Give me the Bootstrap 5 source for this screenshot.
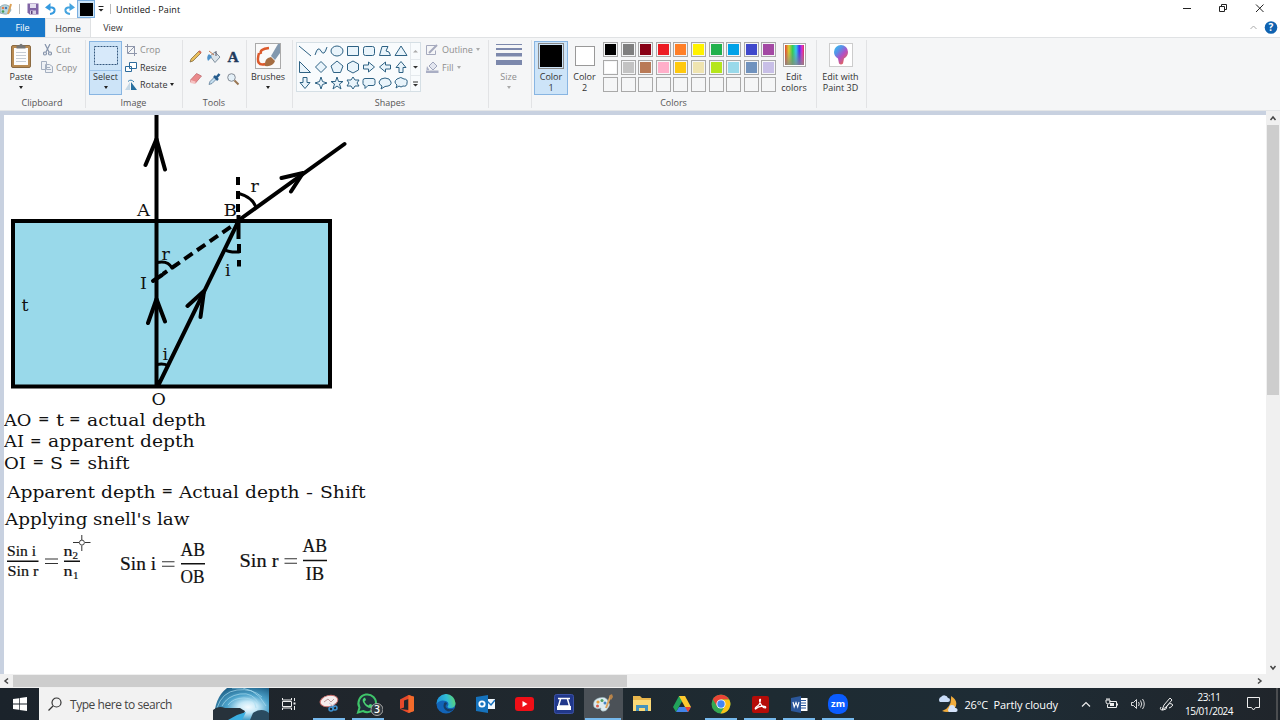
<!DOCTYPE html>
<html lang="en">
<head>
    <meta charset="UTF-8">
    <meta name="viewport" content="width=device-width, initial-scale=1.0">
    <title>Untitled - Paint</title>
    <!-- Bootstrap CSS -->
    <link href="https://cdn.jsdelivr.net/npm/bootstrap@5.3.0/dist/css/bootstrap.min.css" rel="stylesheet">
    <style>
        body { width: 1280px; height: 720px; overflow: hidden; font-family: "Open Sans", "Noto Sans", sans-serif; font-size: 9px; line-height: 11px; color: #333; }
        svg { display: block; flex: none; }
        .cell { display: flex; align-items: center; justify-content: center; flex: none; }
        .caret { width: 0; height: 0; border: 2.5px solid transparent; border-top: 3px solid #222; border-bottom: 0; }
        .caret.off { border-top-color: #aaa; }
        .off { color: #8d8d8d; }

        /* title bar and tabs */
        .titlebar { height: 18px; color: #111; }
        .vline { width: 1px; height: 10px; background: #bbb; }
        .quick-on { width: 18px; height: 18px; background: #cce4f7; border: 1px solid #79aee0; }
        .quick-on div { width: 13px; height: 13px; background: #000; }
        .tabs { height: 19px; }
        .tabs .file { width: 45px; background: #1979ca; color: #fff; }
        .tabs .home { width: 46px; background: #f5f6f7; border: 1px solid #dfe1e3; border-bottom: 0; }
        .tabs .view { width: 44px; }

        /* ribbon */
        .ribbon { height: 74px; background: #f5f6f7; border-top: 1px solid #e0e2e4; border-bottom: 1px solid #e3e5e7; }
        .group { display: flex; flex-direction: column; flex: none; border-right: 1px solid #e2e3e5; margin: 2px 0; padding-top: 1px; }
        .group-body { height: 55px; display: flex; }
        .group-name { height: 13px; line-height: 16px; text-align: center; color: #555; padding-right: 1px; }
        .big { display: flex; flex-direction: column; align-items: center; height: 54px; padding-top: 2px; text-align: center; flex: none; }
        .big .pic { height: 28px; display: flex; }
        .big .caret { margin-top: 4px; }
        .picked { background: #cde4f8; border: 1px solid #88b5e2; padding-top: 1px; }
        .picked .pic.split { border-bottom: 1px solid #9fc6ea; }
        .line { height: 17.5px; display: flex; align-items: center; white-space: nowrap; }
        .gallery { width: 125px; height: 50px; margin-top: 1px; border: 1px solid #d5dfe5; background: #f8fbfd; }
        .gallery-items { width: 113px; display: flex; flex-wrap: wrap; align-content: flex-start; }
        .gallery-items svg { fill: #e9f4fb; stroke: #2e6284; stroke-width: 1; }
        .swatches { width: 177px; display: grid; grid-template-columns: repeat(10, 15px); grid-auto-rows: 15px; gap: 2.5px 2.6px; align-content: start; padding-top: 1px; margin-left: 2px; }
        .swatch { border: 1px solid #a9a9a9; padding: 1px; background-clip: content-box; }

        /* work area */
        .work { height: 563px; }
        .paper { background: #c8d1e0; padding: 4px 0 0 4px; width: 1266px; }
        .paper svg { background: #fff; }
        .bookman { font-family: "DejaVu Serif", serif; font-size: 17.5px; fill: #111; }
        .bookman .eq { font-size: 13.5px; font-weight: 700; }
        .cambria { font-family: "Liberation Serif", serif; fill: #111; stroke: #111; stroke-width: .2; }
        .vscroll { width: 14px; background: #f0f0f0; }
        .hscroll { height: 14px; background: #f0f0f0; }
        .thumb { background: #cdcdcd; }

        /* taskbar */
        .taskbar { height: 32px; background: linear-gradient(90deg, #1b232b 0, #20262c 30%, #1e2b32 60%, #1e2c35 78%, #20252b 100%); color: #fff; }
        .search { width: 230px; background: #f2f2f2; color: #444; font-size: 12px; }
        .apps { width: 549px; margin-left: 1px; }
        .app { flex: 1; display: flex; align-items: center; justify-content: center; }
        .app.open { background: linear-gradient(#76b9ed, #76b9ed) center bottom / 32px 2px no-repeat; }
        .app.front { background-color: #4b5157; background-size: 36px 2px; }
        .weather { font-size: 11px; letter-spacing: -.12px; white-space: pre; }
        .clock { width: 56px; font-size: 10px; line-height: 14px; letter-spacing: -.5px; text-align: center; }
    </style>
</head>
<body class="bg-white d-flex flex-column">

    <!-- Title bar -->
    <div class="titlebar d-flex align-items-center">
        <div class="cell" style="width:13px">
            <svg width="13" height="14" viewBox="0 0 13 14"><path d="M0 5Q4 1 9 4L11 8Q9 13 4 12L0 11Z" fill="#b8d7df" stroke="#7995a0" stroke-width=".7"/><circle cx="3" cy="6" r="1.3" fill="#e57b4a"/><circle cx="3" cy="9.5" r="1.3" fill="#4a9a55"/><circle cx="6" cy="6" r="1.2" fill="#4478b8"/><path d="M11 2L8 12" stroke="#dda156" stroke-width="2"/></svg>
        </div>
        <div class="cell" style="width:12px"><div class="vline"></div></div>
        <div class="cell" style="width:16px">
            <svg width="12" height="12" viewBox="0 0 12 12"><path d="M.5.5h11v11h-9l-2-2Z" fill="#8064a5"/><path d="M3 1h6v4H3Z" fill="#e5e0f0"/><path d="M3 7.5h6V11H3Z" fill="#d5cce3"/><path d="M4 8h1.5v3H4Z" fill="#5c437d"/></svg>
        </div>
        <div class="cell" style="width:19px">
            <svg width="12" height="12" viewBox="0 0 12 12" fill="none" stroke="#359adf" stroke-width="2"><path d="M3 4.5h4Q10 5 9.5 8Q9 10.500 5 11"/><path d="M5.500 0L0 4.500L5.500 8Z" fill="#359adf" stroke="none"/></svg>
        </div>
        <div class="cell" style="width:17px">
            <svg width="12" height="12" viewBox="0 0 12 12" fill="none" stroke="#45a4df" stroke-width="2"><path d="M9 4.500H5Q2 5 2.500 8Q3 10.500 7 11"/><path d="M6.500 0L12 4.500L6.500 8Z" fill="#45a4df" stroke="none"/></svg>
        </div>
        <div class="quick-on cell"><div></div></div>
        <div class="cell" style="width:11px">
            <svg width="6" height="6" viewBox="0 0 6 6"><path d="M.5.500h5" stroke="#222"/><path d="M.5 3h5L3 5.500Z" fill="#222"/></svg>
        </div>
        <div class="cell" style="width:8px"><div class="vline"></div></div>
        <span style="letter-spacing:.1px;margin-left:2px">Untitled - Paint</span>
        <svg class="ms-auto" width="100" height="18" viewBox="1180 0 100 18" fill="none" stroke="#222"><path d="M1183 8.500h8M1219.500 6.500h5v5h-5zM1221.500 6.500v-2h5v5h-2M1256 4.500l7.500 7.500M1263.500 4.500l-7.500 7.500"/></svg>
    </div>

    <!-- Tabs -->
    <div class="tabs d-flex">
        <div class="cell file">File</div>
        <div class="cell home">Home</div>
        <div class="cell view">View</div>
        <svg class="ms-auto" width="30" height="19" viewBox="1250 18 30 19"><path d="M1250.500 29l3-3 3 3" fill="none" stroke="#aaa"/><circle cx="1271" cy="27.500" r="6.300" fill="#0f62b0"/><text x="1271" y="31" text-anchor="middle" font-size="10" font-weight="700" fill="#fff">?</text></svg>
    </div>

    <!-- Ribbon -->
    <div class="ribbon d-flex">
        <div class="group" style="width:86px">
            <div class="group-body">
                <div class="big" style="width:42px">
                    <div class="pic"><svg width="22" height="26" viewBox="0 0 22 26"><rect x="1.500" y="2.500" width="19" height="22" rx="1.500" fill="#b98b52" stroke="#8c6b42"/><path d="M4 5h14v17H4Z" fill="#fdfdfd"/><path d="M6 9.500h10M6 12.500h10M6 15.500h10M6 18.500h10" stroke="#c5ccd5"/><path d="M6.500 2.500h2.500Q11-1 13 2.500h2.500v3h-9Z" fill="#777"/></svg></div>
                    Paste<div class="caret"></div>
                </div>
                <div class="off">
                    <div class="line"><svg style="margin:0 4px 0 1px" width="9" height="12" viewBox="0 0 9 12" fill="none" stroke="#8593aa" stroke-width="1.200"><path d="M2 0l4 8M7 0L3 8"/><circle cx="2" cy="9.500" r="1.500"/><circle cx="7" cy="9.500" r="1.500"/></svg>Cut</div>
                    <div class="line" style="margin-left:-1px"><svg style="margin-right:3px" width="12" height="12" viewBox="0 0 12 12" fill="#eef1f5" stroke="#a4afc0"><path d="M.5.500h5v8h-5zM4.500 3.500h4l3 2v6h-7z"/><path d="M6 6.500h3M6 8.500h4"/></svg>Copy</div>
                </div>
            </div>
            <div class="group-name">Clipboard</div>
        </div>

        <div class="group" style="width:97px">
            <div class="group-body">
                <div class="big picked" style="width:33px;margin-left:3px">
                    <div class="pic split w-100 justify-content-center"><svg width="26" height="24" viewBox="0 0 26 24"><rect x="1.500" y="3.500" width="23" height="18" fill="#d7e9fa" stroke="#35577c" stroke-dasharray="2 1"/></svg></div>
                    Select<div class="caret"></div>
                </div>
                <div style="margin-left:3px">
                    <div class="line off"><svg style="margin-right:3px" width="12" height="12" viewBox="0 0 12 12" fill="none" stroke="#8e96ab"><path d="M2.500 0v9.500H12M0 2.500h9.500V12M3 9l7-7"/></svg>Crop</div>
                    <div class="line"><svg style="margin-right:3px" width="12" height="12" viewBox="0 0 12 12" fill="#fff" stroke="#2c6b9c"><path d="M4.500 1.500h7v6h-7zM.5 5.500h6v5h-6z"/></svg>Resize</div>
                    <div class="line"><svg style="margin-right:3px" width="12" height="12" viewBox="0 0 12 12"><path d="M5 3v8H0Z" fill="#c5d8e6"/><path d="M6 3l6 8H6Z" fill="#286f9f"/><path d="M3 2.500Q6-.5 9 3" fill="none" stroke="#3980b0"/></svg>Rotate<div class="caret" style="margin-left:3px"></div></div>
                </div>
            </div>
            <div class="group-name">Image</div>
        </div>

        <div class="group" style="width:64px">
            <div class="group-body">
                <svg width="63" height="54" viewBox="183 41 63 54">
                    <path d="M190 62l1-3 8-8 2 2-8 8Z" fill="#e8bd5b" stroke="#776036" stroke-width=".7"/><path d="M199 51l2 2" stroke="#d56a5a" stroke-width="2"/>
                    <path d="M210 56l5-4 5 5-5 5.500Z" fill="#dce4ea" stroke="#65798a" stroke-width=".8"/><path d="M209 51l5 4" stroke="#c97b4f"/><path d="M209 54q-3 3-1 7l4-4Z" fill="#4f92ca"/><path d="M216 51v5" stroke="#556"/>
                    <text x="233" y="61.500" text-anchor="middle" font-family="Liberation Serif, serif" font-size="15.500" font-weight="700" fill="#1f3b5c" stroke="#1f3b5c" stroke-width=".4">A</text>
                    <path d="M190.500 80l6-6.500 5 2.500-6 7-5-1Z" fill="#ea8a8c" stroke="#b76468" stroke-width=".7"/><path d="M190.500 80l5 1.500v2.500l-5-1Z" fill="#f5c2c2"/>
                    <path d="M209 84.500l1-3 5-5 2 2-5 5Z" fill="#c5dff0" stroke="#50708c" stroke-width=".7"/><path d="M214 76l4 4M216 78l3.500-4" stroke="#265c8d" stroke-width="2.500"/>
                    <circle cx="231.500" cy="77.500" r="3.800" fill="#e4f0f8" stroke="#858c96"/><path d="M234.500 80.500l4 4" stroke="#987652" stroke-width="2"/>
                </svg>
            </div>
            <div class="group-name">Tools</div>
        </div>

        <div class="group" style="width:46px">
            <div class="group-body">
                <div class="big w-100" style="padding-right:3px">
                    <div class="pic"><svg width="26" height="26" viewBox="0 0 26 26"><rect x=".5" y=".5" width="25" height="25" fill="#fafafa" stroke="#aaa"/><path d="M14 5Q4 6 6 11M4 10Q0 24 11 21" fill="none" stroke="#dc5a2c" stroke-width="2.500"/><path d="M10 23q-1-8 6-9l4 4q-2 6-10 5Z" fill="#a56d42"/><path d="M16 13l7-12h2v9l-5 7Z" fill="#8298ae"/></svg></div>
                    Brushes<div class="caret"></div>
                </div>
            </div>
        </div>

        <div class="group" style="width:196px">
            <div class="group-body">
                <div class="gallery d-flex" style="margin-left:3px">
                    <div class="gallery-items" id="shapes"></div>
                    <svg width="10" height="48" viewBox="0 0 10 48"><path d="M.5 0v48M0 16.500h10M0 32.500h10" stroke="#e4e9ed"/><path d="M3 9.500h5L5.500 7Z" fill="#aaa"/><path d="M3 23h5l-2.500 2.500ZM3 41h5l-2.500 2.500Z" fill="#333"/><path d="M3 39h5" stroke="#333"/></svg>
                </div>
                <div class="off" style="margin-left:5px">
                    <div class="line"><svg style="margin-right:3px" width="13" height="12" viewBox="0 0 13 12" fill="none" stroke="#a5a9bd"><path d="M.5 1.500h9M.5 1.500v9h9v-4"/><path d="M3 9l8-8" stroke-width="2"/></svg>Outline<div class="caret off" style="margin-left:3px"></div></div>
                    <div class="line"><svg style="margin-right:3px" width="13" height="12" viewBox="0 0 13 12"><path d="M3 5l4-4 4 4-4 4Z" fill="#e3e6ef" stroke="#9fa5bb"/><path d="M0 9.500h12.500V12H0zM1 5q-1 3 0 5h3Z" fill="#a9aec4"/></svg>Fill<div class="caret off ms-1"></div></div>
                </div>
            </div>
            <div class="group-name">Shapes</div>
        </div>

        <div class="group" style="width:43px">
            <div class="group-body">
                <div class="big off w-100" style="padding-right:3px">
                    <div class="pic"><svg width="26" height="24" viewBox="0 0 26 24" fill="#7c88ac"><path d="M0 1h26v1H0zM0 5h26v2H0zM0 10h26v3.500H0zM0 17h26v5H0z"/></svg></div>
                    Size<div class="caret off"></div>
                </div>
            </div>
        </div>

        <div class="group" style="width:285px">
            <div class="group-body">
                <div class="big picked" style="width:34px;margin-left:2px">
                    <div class="pic"><svg width="26" height="26" viewBox="0 0 26 26"><rect x=".5" y=".5" width="25" height="25" fill="#cde4f8" stroke="#8a8a8a"/><path d="M2 2h22v22H2Z"/></svg></div>
                    <div>Color</div><div>1</div>
                </div>
                <div class="big" style="width:33px">
                    <div class="pic align-items-center" style="padding-bottom:3px"><svg width="20" height="20" viewBox="0 0 20 20"><rect x=".5" y=".5" width="19" height="19" fill="#fff" stroke="#999"/></svg></div>
                    <div>Color</div><div>2</div>
                </div>
                <div class="swatches" id="swatches"></div>
                <div class="big" style="width:28px">
                    <div class="pic"><svg width="23" height="24" viewBox="0 0 23 24"><defs><linearGradient id="hue"><stop stop-color="#d43"/><stop offset=".2" stop-color="#dc3"/><stop offset=".4" stop-color="#3c5"/><stop offset=".58" stop-color="#3ce"/><stop offset=".75" stop-color="#43e"/><stop offset=".9" stop-color="#d3c"/><stop offset="1" stop-color="#d35"/></linearGradient><linearGradient id="fade" x2="0" y2="1"><stop offset=".3" stop-color="#888" stop-opacity="0"/><stop offset="1" stop-color="#888" stop-opacity=".8"/></linearGradient></defs><rect x=".5" y=".5" width="22" height="23" fill="#fff" stroke="#aaa"/><path d="M2 2h19v20H2Z" fill="url(#hue)"/><path d="M2 2h19v20H2Z" fill="url(#fade)"/></svg></div>
                    <div>Edit</div><div>colors</div>
                </div>
            </div>
            <div class="group-name">Colors</div>
        </div>

        <div class="group" style="width:50px">
            <div class="group-body">
                <div class="big w-100 text-nowrap" style="padding-right:2px">
                    <div class="pic"><svg width="24" height="24" viewBox="0 0 24 24"><defs><linearGradient id="pin" x1="0" y1="0" x2=".8" y2="1"><stop stop-color="#32c8ee"/><stop offset=".35" stop-color="#5a8ee8"/><stop offset=".6" stop-color="#b34fc4"/><stop offset="1" stop-color="#ee6a3c"/></linearGradient></defs><rect x=".5" y=".5" width="23" height="23" fill="#fff" stroke="#ccc"/><path d="M12 2a7 7 0 0 1 7 7q0 4-4 6.500l-1 5q-2 2-4 0l-1-5Q5 13 5 9a7 7 0 0 1 7-7Z" fill="url(#pin)"/></svg></div>
                    <div>Edit with</div><div>Paint 3D</div>
                </div>
            </div>
        </div>
    </div>

    <!-- Drawing area -->
    <div class="work d-flex">
        <div class="paper">
            <svg width="1262" height="559" viewBox="4 115 1262 559">
                <g fill="none" stroke="#000" stroke-width="4" stroke-linecap="round" stroke-linejoin="round">
                    <rect x="13" y="221" width="317" height="165.500" fill="#99d9ea" stroke-linejoin="miter"/>
                    <path d="M156.500 110V386M158 386L239 220L344.500 144"/>
                    <path d="M145.500 165L156.500 139L165 169.500M148 323L156.500 299L165 321.500M187.500 306L204 291L200.500 317M281.500 178L303 173L291 191.500"/>
                    <path d="M163 274L239 221" stroke-dasharray="10 5.500" stroke-dashoffset="5" stroke-linecap="butt"/>
                    <path d="M153 281L162 275"/>
                    <path d="M238 177v8M238 191v8M238 204v8M238.500 215v24M239 244v9M239 260v6.500" stroke-linecap="butt"/>
                    <path d="M239 193.500Q252 197 256 207M157 262.500Q168 260 172 268M225.500 250Q229 252.500 239 252M157 364.500Q163 363 168 365.500" stroke-width="3"/>
                </g>
                <g class="bookman">
                    <text x="137" y="215.500" textLength="13" lengthAdjust="spacingAndGlyphs">A</text>
                    <text x="223.500" y="215.500" textLength="13.500" lengthAdjust="spacingAndGlyphs">B</text>
                    <text x="250.500" y="191.500">r</text>
                    <text x="161.500" y="260">r</text>
                    <text x="225" y="275.500">i</text>
                    <text x="140" y="288.500">I</text>
                    <text x="21.500" y="311">t</text>
                    <text x="162.500" y="359.500">i</text>
                    <text x="151.500" y="404.500">O</text>
                </g>
                <g class="bookman" id="notes"></g>
                <g class="cambria" font-size="14.500">
                    <text x="7" y="555.500" textLength="29" lengthAdjust="spacingAndGlyphs">Sin i</text>
                    <text x="7.500" y="576" textLength="31" lengthAdjust="spacingAndGlyphs">Sin r</text>
                    <text x="63.500" y="556" textLength="9" lengthAdjust="spacingAndGlyphs">n</text>
                    <text x="72.500" y="559" font-size="11">2</text>
                    <text x="63.500" y="576" textLength="9" lengthAdjust="spacingAndGlyphs">n</text>
                    <text x="73" y="579" font-size="11">1</text>
                </g>
                <g class="cambria" font-size="19">
                    <text x="120" y="570" textLength="36" lengthAdjust="spacingAndGlyphs">Sin i</text>
                    <text x="180.500" y="555.500" textLength="24.500" lengthAdjust="spacingAndGlyphs">AB</text>
                    <text x="180.500" y="582.500" textLength="24" lengthAdjust="spacingAndGlyphs">OB</text>
                    <text x="239.500" y="567" textLength="39" lengthAdjust="spacingAndGlyphs">Sin r</text>
                    <text x="302.500" y="552" textLength="24.500" lengthAdjust="spacingAndGlyphs">AB</text>
                    <text x="305.500" y="579.500" textLength="18.500" lengthAdjust="spacingAndGlyphs">IB</text>
                </g>
                <path d="M7 561.200h31.500M64 561.200h16M181 563.800h24M303 560.500h24" stroke="#111" stroke-width="1.600"/>
                <path d="M45 559h13M45 563.500h13M162 561.800h12.500M162 566.200h12.500M284.500 558.800h12.500M284.500 563.200h12.500" stroke="#333" stroke-width="1.100"/>
                <!-- crosshair cursor -->
                <path d="M73 542.500h6M85 542.500h5.500M81.800 535v5M81.800 545.500v5.500" stroke="#333"/>
                <circle cx="81.900" cy="542.600" r="2.500" fill="#fff" stroke="#444"/>
            </svg>
        </div>
        <div class="vscroll d-flex flex-column align-items-center">
            <svg width="14" height="14" viewBox="0 0 14 14"><path d="M4.500 9L7 6l2.500 3" fill="none" stroke="#444" stroke-width="1.500"/></svg>
            <div class="thumb" style="width:12px;height:270px"></div>
            <svg class="mt-auto" width="14" height="14" viewBox="0 0 14 14"><path d="M4.500 6L7 9l2.500-3" fill="none" stroke="#444" stroke-width="1.500"/></svg>
        </div>
    </div>
    <div class="hscroll d-flex align-items-center">
        <svg width="13" height="14" viewBox="0 0 13 14"><path d="M8 4.500L5 7l3 2.500" fill="none" stroke="#444" stroke-width="1.500"/></svg>
        <div class="thumb" style="width:614px;height:12px"></div>
        <svg class="ms-auto" style="margin-right:13px" width="14" height="14" viewBox="0 0 14 14"><path d="M5 4.500L8 7l-3 2.500" fill="none" stroke="#444" stroke-width="1.500"/></svg>
    </div>

    <!-- Taskbar -->
    <div class="taskbar d-flex">
        <div class="cell" style="width:39px"><svg width="14" height="14" viewBox="0 0 14 14" fill="#fff"><path d="M0 2l6-.8v5.400H0zM6.700 1.100L14 0v6.600H6.700zM0 7.400h6v5.400L0 12zM6.700 7.400H14V14l-7.300-1.100z"/></svg></div>
        <div class="search d-flex align-items-center">
            <svg style="margin:0 8px 0 9px" width="14" height="14" viewBox="0 0 14 14" fill="none" stroke="#333" stroke-width="1.200"><circle cx="8.500" cy="5.500" r="4.500"/><path d="M5 9L.5 13.500"/></svg>
            <span style="letter-spacing:-.45px;padding-top:1px">Type here to search</span>
            <svg class="ms-auto" width="57" height="32" viewBox="0 0 57 32">
                <defs><radialGradient id="ice" cx=".62" cy=".6" r=".7"><stop stop-color="#f4fbff"/><stop offset=".25" stop-color="#c5e8f7"/><stop offset=".55" stop-color="#4da3cb"/><stop offset="1" stop-color="#1d5e85"/></radialGradient></defs>
                <path d="M15 0H57V32H2Q2 10 15 0Z" fill="url(#ice)"/>
                <g fill="none" stroke="#a8dcef" stroke-width="1" opacity=".7"><path d="M5 20Q10 4 25 2T50 9M10 18Q15 8 28 6T47 16M20 0Q43-3 54 18M16 17Q21 10 32 10T44 20"/></g>
                <path d="M1 22q5-5 12-2l15 0q3 2 5 3l-2 5-8 4H1Z" fill="#27323b"/><path d="M41 25q7-5 13-2l3 2v7H38Z" fill="#2a4b60"/><path d="M16 32l9-5 9-3-4 8Z" fill="#3aaee0"/>
            </svg>
        </div>
        <div class="cell" style="width:39px"><svg width="14" height="14" viewBox="0 0 14 14" fill="none" stroke="#eee"><path d="M.5 1v2h9V1M.5 13v-2h9v2M.5 4.500h9v5h-9zM12.500 1v3M12.500 9v4"/><path d="M11.500 5.500h2v2h-2z" fill="#eee" stroke="none"/></svg></div>
        <div class="apps d-flex">
            <div class="app open"><svg width="20" height="20" viewBox="0 0 20 20"><ellipse cx="10" cy="7" rx="9" ry="5.500" transform="rotate(-12 10 7)" fill="#f5eded" stroke="#c96a67"/><path d="M5 8l4-3 3 3 3-3" fill="none" stroke="#b99"/><path d="M10 9l6 4M16 9l-4 5" stroke="#ccd"/><g fill="none" stroke="#3e91d0" stroke-width="1.500"><circle cx="12" cy="15" r="2"/><circle cx="16" cy="14" r="2"/></g></svg></div>
            <div class="app open"><svg width="30" height="26" viewBox="0 0 30 26"><path d="M5 21.500l1.500-5A8.800 8.800 0 1 1 10 20Z" fill="#20303a" stroke="#3fc469" stroke-width="2"/><path d="M11 7q-2 1-1 4 3 6 8 6 2 0 2-3l-3-1-1.500 1.500q-3-1-4-4L13 9l-1-2.500Z" fill="#4ad173"/><circle cx="24" cy="18.500" r="6" fill="#333b41" stroke="#aaa"/><text x="24" y="22.300" text-anchor="middle" font-size="10.500" font-weight="600" fill="#fff">3</text></svg></div>
            <div class="app"><svg width="16" height="18" viewBox="0 0 16 18"><path d="M1 4.500L9.500 0 15 1.700V16L9.500 18 1 14l8.500 1V4L5 5.500v7L1 14Z" fill="#e6492b"/><path d="M9.500 0L15 1.700V16l-5.500 2Z" fill="#f36b2b"/></svg></div>
            <div class="app"><svg width="20" height="20" viewBox="0 0 20 20"><defs><linearGradient id="edge" x1="0" y1=".4" x2="1" y2=".2"><stop stop-color="#1d93dc"/><stop offset=".55" stop-color="#32bdd4"/><stop offset="1" stop-color="#61d765"/></linearGradient></defs><circle cx="10" cy="10" r="9.500" fill="#1264b8"/><path d="M.5 10A9.500 9.500 0 0 1 19.500 9q0 5-5 5-3 0-3-1.500Q14 9 10 7 4 5 .5 10Z" fill="url(#edge)"/><path d="M8 9q-2 6 4 8.500 4 0 6-3-6 2-8-1-1-2 1-4-1-2-3-.5Z" fill="#163d65"/></svg></div>
            <div class="app"><svg width="19" height="18" viewBox="0 0 19 18"><path d="M11 4h8v10h-8Z" fill="#f3f8fc"/><path d="M11 6l4 4 4-5" fill="none" stroke="#1971bd" stroke-width="1.500"/><path d="M0 2l12-2v18L0 16Z" fill="#1673bd"/><circle cx="6" cy="9" r="2.700" fill="none" stroke="#fff" stroke-width="1.800"/></svg></div>
            <div class="app"><svg width="19" height="14" viewBox="0 0 19 14"><rect width="19" height="14" rx="3" fill="#f00f17"/><path d="M7.500 4l5 3-5 3Z" fill="#fff"/></svg></div>
            <div class="app"><svg width="20" height="20" viewBox="0 0 20 20"><rect x=".5" y=".5" width="19" height="19" rx="2" fill="#21388b" stroke="#3c52a5"/><path d="M4 4.500h12M6.500 5l-2 7h11l-2-7" fill="none" stroke="#fff" stroke-width="1.500"/><path d="M3 12h14v4H3Z" fill="#fff"/></svg></div>
            <div class="app open front"><svg width="20" height="20" viewBox="0 0 20 20"><path d="M1 13Q-1 6 6 4q7-2 9 3 3 4 0 7-2 4-6 3-2-1-1-3-4 2-7-1Z" fill="#dcebf0" stroke="#9cb7c0" stroke-width=".6"/><circle cx="5" cy="8" r="1.600" fill="#e8a13c"/><circle cx="9" cy="6.500" r="1.500" fill="#4d9e61"/><circle cx="4.500" cy="12" r="1.500" fill="#d95a4a"/><circle cx="12" cy="9" r="1.500" fill="#4585c4"/><path d="M18 1l-5 13" stroke="#d9a25d" stroke-width="2"/><path d="M16 2l3-2 1 3-2 3Z" fill="#b88349"/></svg></div>
            <div class="app"><svg width="18" height="16" viewBox="0 0 18 16"><path d="M0 0h7l2 2h9v13H0Z" fill="#e9b64c"/><path d="M0 4h18v11H0Z" fill="#fbd977"/><path d="M3 15V9h12v6h-3v-3H6v3Z" fill="#4593bd"/></svg></div>
            <div class="app"><svg width="18" height="16" viewBox="0 0 18 16"><path d="M6 0h6L9 5.300 3 16 0 11Z" fill="#21a35b"/><path d="M6 0h6l6 11h-6Z" fill="#fdc92e"/><path d="M6 11h12l-3 5H3Z" fill="#4285eb"/><path d="M12 11h6l-3 5Z" fill="#e74235"/></svg></div>
            <div class="app open"><svg width="20" height="20" viewBox="0 0 20 20"><circle cx="10" cy="10" r="9.500" fill="#35a853"/><path d="M1.800 5.200A9.500 9.500 0 0 1 18.200 5.500H10L6 12.200Z" fill="#e94435"/><path d="M18.200 5.500A9.500 9.500 0 0 1 9.500 19.500L14 12 10 5.500Z" fill="#fbc116"/><circle cx="10" cy="10" r="4.600" fill="#fff"/><circle cx="10" cy="10" r="3.700" fill="#4285f4"/></svg></div>
            <div class="app open"><svg width="17" height="17" viewBox="0 0 17 17"><rect width="17" height="17" rx="2" fill="#b50c08"/><path d="M8.500 3q-2 0 0 4.500T13.500 12q1-2-3-1.800T3.500 13q-1-1 2-3t3-7" fill="none" stroke="#fff" stroke-width="1.200"/></svg></div>
            <div class="app open"><svg width="17" height="17" viewBox="0 0 17 17"><path d="M8 2h8.500v13H8Z" fill="#fff"/><path d="M10 4.500h5M10 7h5M10 9.500h5M10 12h5" stroke="#2b579a"/><path d="M0 2l10-2v17L0 15Z" fill="#2b579a"/><path d="M2 6l1.200 5L5 6.500 6.700 11 8 6" fill="none" stroke="#fff" stroke-width="1.100"/></svg></div>
            <div class="app open"><svg width="20" height="20" viewBox="0 0 20 20"><rect width="20" height="20" rx="8.500" fill="#0b5cff"/><text x="10" y="13" text-anchor="middle" font-size="9.500" font-weight="700" fill="#fff" textLength="14" lengthAdjust="spacingAndGlyphs">zm</text></svg></div>
        </div>
        <div class="ms-auto d-flex align-items-center">
            <svg style="margin-right:6px" width="20" height="20" viewBox="0 0 20 20"><path d="M13 2q8 5 4 12-5 6-13 3Q14 14 13 2Z" fill="#f2ac3b"/><path d="M2 8a3 3 0 0 1 1-5 4 4 0 0 1 7 1 2 2 0 0 1 0 4Z" fill="#c9dcf7"/><path d="M11 18a2.500 2.500 0 0 1 0-4 3 3 0 0 1 6 0 2 2 0 0 1 1 4Z" fill="#d6e4fa"/></svg>
            <span class="weather">26°C  Partly cloudy</span>
            <svg style="margin-left:21px" width="102" height="32" viewBox="1078 688 102 32" fill="none" stroke="#eee">
                <path d="M1081 706.500l4-4 4 4" stroke-width="1.200"/>
                <path d="M1108.500 701.500h7v6h-9v-3M1116.500 703.500v2" /><path d="M1109 703h4v3h-4Z" fill="#eee" stroke="none"/><path d="M1105 700h4v2q0 2-2 2t-2-2ZM1106 698v2M1108 698v2"/>
                <path d="M1130.500 702.500h2l3-3v9l-3-3h-2zM1137.500 702q1.500 2 0 4M1139.500 700.500q2.500 3.500 0 7M1141.500 699q3.500 5 0 10" stroke-width=".9"/>
                <path d="M1161 710l2-5 6-7 2 2-6 7ZM1160 707q-2 3 2 3t4-4q3-4 5-2t-3 4"/>
            </svg>
            <div class="clock">23:11<br>15/01/2024</div>
            <svg style="margin-left:10px" width="33" height="32" viewBox="1247 688 33 32" fill="none" stroke="#eee"><path d="M1247.500 697.500h12v10h-4l-2 2.500-2-2.500h-4z"/><path d="M1277 688v32" stroke="#777"/></svg>
        </div>
    </div>

    <!-- Bootstrap JS and dependencies -->
    <script src="https://cdn.jsdelivr.net/npm/bootstrap@5.3.0/dist/js/bootstrap.bundle.min.js"></script>
    <script>
        // Shape gallery, one 16x16 outline per cell
        const shapes = [
            'M2 3L14 13', 'M2 12Q5 2 8 8T14 4', 'M2 8a6 5 0 1 1 12 0a6 5 0 1 1-12 0Z', 'M2.5 3.500h11v9h-11Z',
            'M4.500 3.500h7q2 0 2 2v5q0 2-2 2h-7q-2 0-2-2v-5q0-2 2-2Z', 'M2.500 12.500L5 3.500h6L9 8l3 1 1.500 3.500Z', 'M8 3l6 9.500H2Z',
            'M2.500 2.500v11h11Z', 'M8 2.500L13.500 8 8 13.500 2.500 8Z', 'M8 2l6 5-2.500 6.500h-7L2 7Z', 'M8 2l5.500 3v6L8 14l-5.500-3V5Z',
            'M2.500 6h5V3L13.500 8l-6 5v-3h-5Z', 'M13.500 6h-5V3L2.500 8l6 5v-3h5Z', 'M6 13.500v-5H3L8 2.500l5 6h-3v5Z',
            'M6 2.500v5H3l5 6 5-6h-3v-5Z', 'M8 2l1.500 4.500L14 8 9.500 9.500 8 14 6.500 9.500 2 8l4.500-1.500Z', 'M8 2l1.500 4.500H14L10.500 9l1.500 5-4-3-4 3 1.500-5L2 6.500h4.500Z',
            'M8 2l2 3h4l-2 3 2 3h-4l-2 3-2-3H2l2-3-2-3h4Z', 'M4 3.500h8q2 0 2 2v3q0 2-2 2H7l-3 3v-3q-2 0-2-2v-3q0-2 2-2Z',
            'M5 11Q2 9.500 2 7q1-4 6-4t6 4-6 4.500L4 14Z', 'M4 4q4-3 7 0 4 0 3 4 0 4-4 3-2 2-4 0l-3 2 1-3q-4-3 0-6Z'
        ];
        document.getElementById('shapes').innerHTML = shapes.map(d =>
            `<svg width="16" height="16" viewBox="0 0 16 16"><path d="${d}"/></svg>`).join('');

        // Colour palette: two filled rows, then the empty custom row
        const colors = [
            '#000000', '#7f7f7f', '#880015', '#ed1c24', '#ff7f27', '#fff200', '#22b14c', '#00a2e8', '#3f48cc', '#a349a4',
            '#ffffff', '#c3c3c3', '#b97a57', '#ffaec9', '#ffc90e', '#efe4b0', '#b5e61d', '#99d9ea', '#7092be', '#c8bfe7',
            ...Array(10).fill('#f5f6f7')
        ];
        document.getElementById('swatches').innerHTML = colors.map(c =>
            `<div class="swatch" style="background-color:${c}"></div>`).join('');

        // Notes under the diagram: baseline, then [word, start x, end x]
        const notes = [
            [425.5, ['AO', 4, 31.5], ['=', 38, 49.5], ['t', 56, 64], ['=', 69, 80.5], ['actual', 87, 145.5], ['depth', 152, 206]],
            [447, ['AI', 4, 24], ['=', 30, 41.5], ['apparent', 48, 134], ['depth', 140, 194.5]],
            [468.5, ['OI', 4, 26], ['=', 32.5, 44], ['S', 50, 63], ['=', 69, 80.5], ['shift', 87.5, 129.5]],
            [497.5, ['Apparent', 7, 95], ['depth', 101, 155.5], ['=', 161.5, 173], ['Actual', 179, 239], ['depth', 245, 299.5], ['-', 306, 313], ['Shift', 320, 365.5]],
            [524.5, ['Applying', 5, 87.5], ["snell's", 93, 151], ['law', 157, 189.5]]
        ];
        // The equals sign is smaller and bolder, so it is lifted to the middle of the line
        document.getElementById('notes').innerHTML = notes.map(([y, ...words]) =>
            '<text>' + words.map(([w, x1, x2]) =>
                `<tspan x="${x1}" y="${w === '=' ? y - 2.5 : y}" textLength="${x2 - x1}" lengthAdjust="spacingAndGlyphs"${w === '=' ? ' class="eq"' : ''}>${w}</tspan>`).join(' ') + '</text>').join('');
    </script>
</body>
</html>
